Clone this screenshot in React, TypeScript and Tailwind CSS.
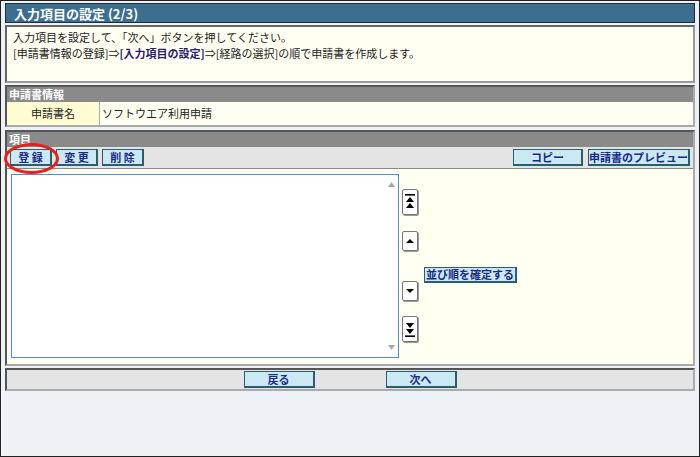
import React from 'react';

const font = { fontFamily: '"Noto Sans CJK JP", "Liberation Sans", sans-serif' };

function Btn({ label, className = '' }: { label: string; className?: string }) {
    return (
        <button
            className={`h-[17px] border border-[#2b5d6e] border-b-2 border-r-2 bg-[#cbe9f3] text-[11px] font-bold leading-[14px] text-[#1a2a8a] ${className}`}
        >
            {label}
        </button>
    );
}

function ArrowBtn({ kind }: { kind: 'top' | 'up' | 'down' | 'bottom' }) {
    const tall = kind === 'top' || kind === 'bottom';
    return (
        <div
            className={`flex w-[16px] items-center justify-center rounded-[2px] border border-[#777] bg-white shadow-[1px_1px_0_#999] ${tall ? 'h-[26px]' : 'h-[20px]'}`}
        >
            <svg width="10" height={tall ? 18 : 8} viewBox={tall ? '0 0 10 18' : '0 0 10 8'}>
                {kind === 'top' && (
                    <>
                        <rect x="0" y="1" width="10" height="1.6" fill="#000" />
                        <path d="M5 4 L9 9 L1 9 Z" fill="#000" />
                        <path d="M5 10 L9 15 L1 15 Z" fill="#000" />
                    </>
                )}
                {kind === 'up' && <path d="M5 2 L9 6 L1 6 Z" fill="#000" />}
                {kind === 'down' && <path d="M1 2 L9 2 L5 6 Z" fill="#000" />}
                {kind === 'bottom' && (
                    <>
                        <path d="M1 3 L9 3 L5 8 Z" fill="#000" />
                        <path d="M1 9 L9 9 L5 14 Z" fill="#000" />
                        <rect x="0" y="15.4" width="10" height="1.6" fill="#000" />
                    </>
                )}
            </svg>
        </div>
    );
}

export default function App() {
    return (
        <div
            className="relative flex h-[457px] w-[700px] flex-col border border-[#222] bg-[#eef1f5] px-[4px] pt-[2px]"
            style={font}
        >
            {/* title */}
            <div className="flex h-[20px] shrink-0 items-center border border-[#1f2f3a] bg-[#3b6e8f] pl-[8px] text-[13px] font-bold leading-none text-white">
                入力項目の設定 (2/3)
            </div>

            {/* info */}
            <div className="mt-[2px] h-[58px] shrink-0 border-2 border-[#666] border-r-[#999] border-b-[#999] bg-[#fffff2] px-[6px] pt-[2px] text-[11px] leading-[16px] text-[#222]">
                <p>入力項目を設定して、「次へ」ボタンを押してください。</p>
                <p>
                    [申請書情報の登録]⇒<span className="font-bold text-[#2a1a6e]">[入力項目の設定]</span>⇒[経路の選択]の順で申請書を作成します。
                </p>
            </div>

            {/* application info */}
            <div className="mt-[2px] shrink-0 border-2 border-[#555] border-r-[#aaa] border-b-[#aaa] bg-[#fffff2]">
                <div className="flex h-[15px] items-center bg-[#8a8a8a] pl-[2px] text-[11px] font-bold leading-none text-white">
                    申請書情報
                </div>
                <div className="grid h-[23px] grid-cols-[93px_1fr] text-[11px] leading-none text-[#222]">
                    <div className="flex items-center justify-center border-r border-[#aaa] bg-[#fffbd2]">申請書名</div>
                    <div className="flex items-center pl-[2px]">ソフトウエア利用申請</div>
                </div>
            </div>

            {/* items */}
            <div className="mt-[3px] shrink-0 border-2 border-[#555] border-r-[#aaa] border-b-[#aaa]">
                <div className="flex h-[15px] items-center bg-[#8a8a8a] pl-[2px] text-[11px] font-bold leading-none text-white">
                    項目
                </div>
                <div className="flex h-[22px] items-center justify-between border-b border-[#888] bg-[#e4e4e4] px-[3px]">
                    <div className="flex gap-[4px]">
                        <Btn label="登 録" className="w-[42px]" />
                        <Btn label="変 更" className="w-[42px]" />
                        <Btn label="削 除" className="w-[42px]" />
                    </div>
                    <div className="flex gap-[5px]">
                        <Btn label="コピー" className="w-[70px]" />
                        <Btn label="申請書のプレビュー" className="w-[102px]" />
                    </div>
                </div>
                <div className="flex h-[195px] bg-[#fffff2] pl-[4px] pt-[5px]">
                    <div className="relative h-[184px] w-[388px] border border-[#4a8de6] bg-white">
                        <svg className="absolute right-[3px] top-[7px]" width="7" height="5" viewBox="0 0 7 5">
                            <path d="M3.5 0 L7 5 L0 5 Z" fill="#a8a8a8" />
                        </svg>
                        <svg className="absolute bottom-[7px] right-[3px]" width="7" height="5" viewBox="0 0 7 5">
                            <path d="M0 0 L7 0 L3.5 5 Z" fill="#a8a8a8" />
                        </svg>
                    </div>
                    <div className="ml-[3px] flex flex-col pt-[15px]">
                        <ArrowBtn kind="top" />
                        <div className="h-[16px]" />
                        <ArrowBtn kind="up" />
                        <div className="h-[30px]" />
                        <ArrowBtn kind="down" />
                        <div className="h-[15px]" />
                        <ArrowBtn kind="bottom" />
                    </div>
                    <div className="ml-[6px] pt-[86px]">
                        <button className="h-[16px] w-[93px] border border-[#2b5d6e] border-b-2 border-r-2 bg-[#cbe9f3] text-[11px] font-bold leading-[13px] text-[#1a2a8a]">
                            並び順を確定する
                        </button>
                    </div>
                </div>
            </div>

            {/* footer */}
            <div className="mt-[2px] flex h-[23px] shrink-0 items-center justify-center gap-[71px] border-2 border-[#555] border-r-[#aaa] border-b-[#aaa] bg-[#e4e4e4]">
                <Btn label="戻る" className="w-[71px]" />
                <Btn label="次へ" className="w-[71px]" />
            </div>

            {/* highlight circle */}
            <div className="pointer-events-none absolute left-[3px] top-[142px] h-[31px] w-[55px] rounded-[50%] border-[3px] border-[#e8201a]" />
        </div>
    );
}
